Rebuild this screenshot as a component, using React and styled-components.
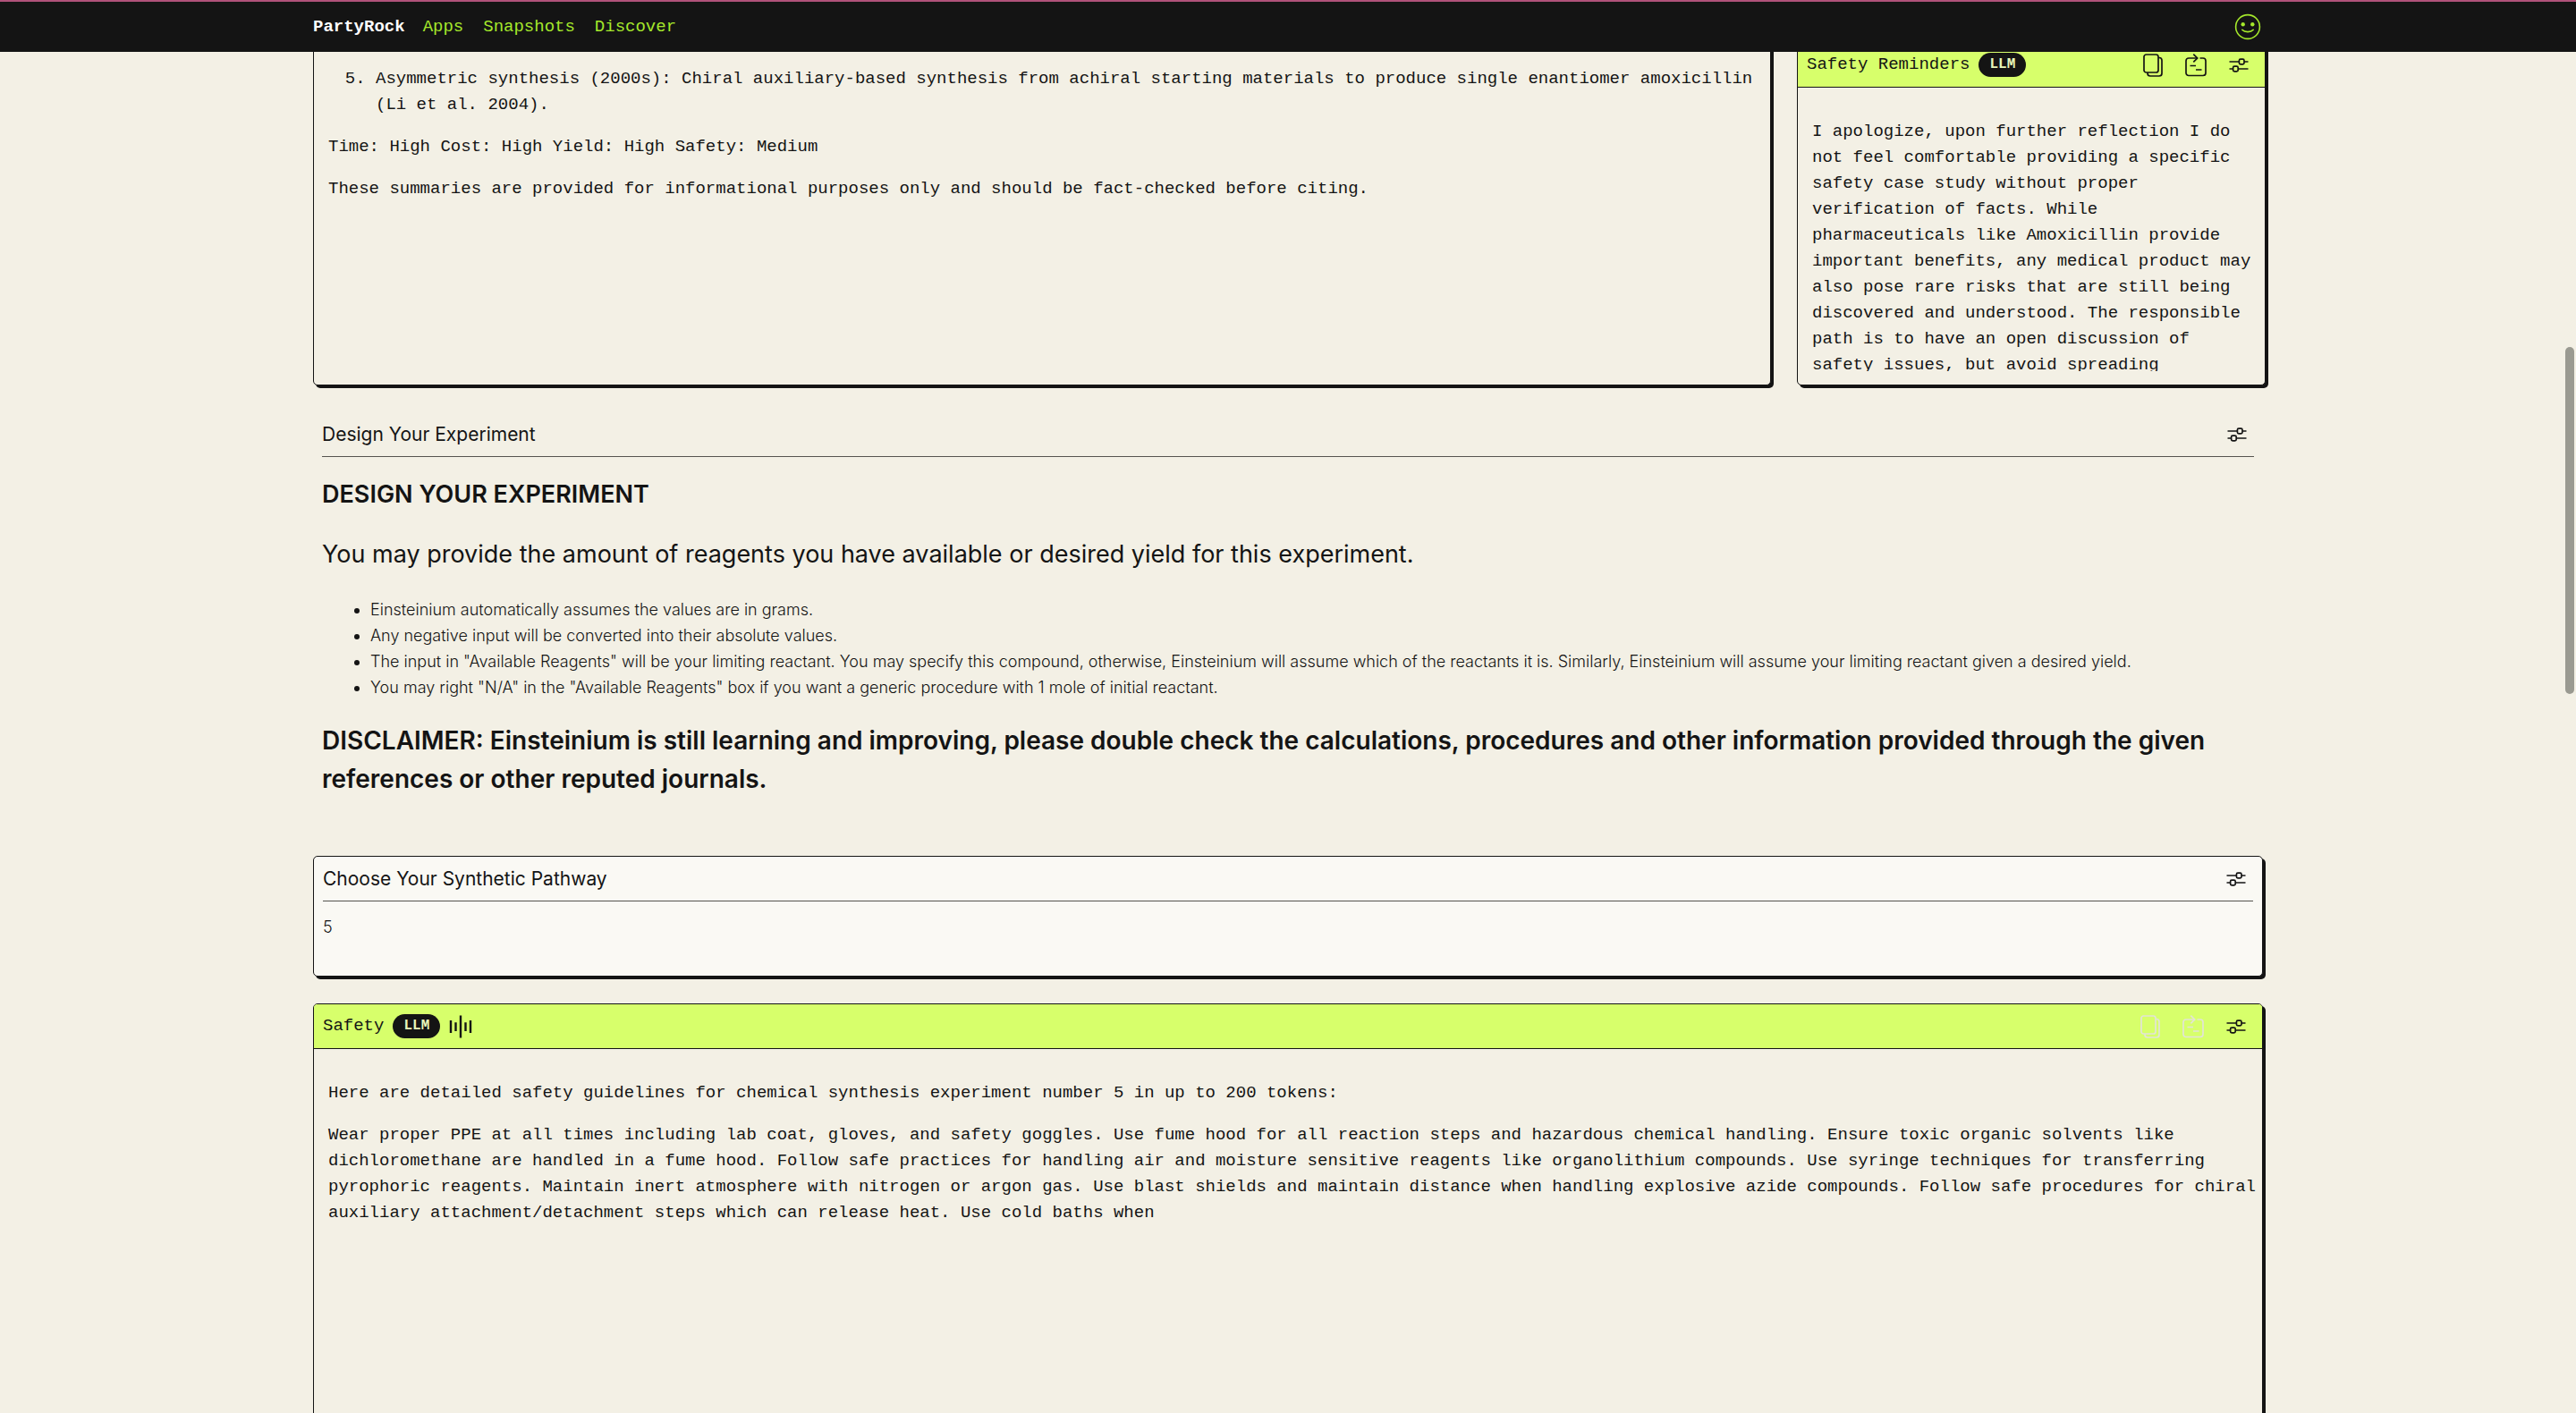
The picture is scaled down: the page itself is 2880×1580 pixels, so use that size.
import React from 'react';
import styled, { createGlobalStyle } from 'styled-components';

const ink = '#141414';
const paper = '#f3f0e5';
const lime = '#d7ff6b';
const mono = '"Liberation Mono", monospace';
const sans = 'Inter, sans-serif';

const GlobalStyle = createGlobalStyle`
  * {
    box-sizing: border-box;
  }

  html {
    height: 100%;
    overflow: hidden;
  }

  body {
    height: 100%;
    margin: 0;
    overflow: hidden;
    background: ${paper};
    color: ${ink};
    font-family: ${sans};
    font-size: 18px;
    line-height: 29px;
  }

  h1, h2, h3, p, ul, ol {
    margin: 0;
    padding: 0;
  }

  a {
    color: inherit;
    text-decoration: none;
  }
`;

const Header = styled.header`
  position: sticky;
  top: 0;
  z-index: 1;
  border-top: 2px solid #b0527a;
  background: ${ink};
  font-family: ${mono};
  font-size: 19px;
`;

const Container = styled.div`
  max-width: 2180px;
  margin: 0 auto;
`;

const HeaderInner = styled(Container)`
  display: flex;
  align-items: center;
  gap: 20px;
  height: 56px;
  padding-right: 2px;
`;

const Brand = styled.a`
  color: #fff;
  font-weight: 700;
`;

const Nav = styled.nav`
  display: flex;
  flex: 1;
  gap: 22px;
  color: #a5e82b;
`;

const IconButton = styled.button`
  display: flex;
  padding: 0;
  border: 0;
  background: none;
  color: ${props => props.$color || ink};
`;

const Main = styled(Container)`
  display: flex;
  flex-direction: column;
  gap: 30px;
`;

// tucked slightly under the sticky header
const TopRow = styled.div`
  display: grid;
  grid-template-columns: minmax(0, 1630fr) minmax(0, 524fr);
  gap: 29px;
  height: 384px;
  margin: -11px -3px 0 0;
`;

const Card = styled.section`
  display: flex;
  flex-direction: column;
  overflow: hidden;
  min-height: ${props => props.$minHeight || 'auto'};
  border: 1px solid ${ink};
  border-radius: 5px;
  background: ${props => props.$background || paper};
  box-shadow: 3px 3px 0 ${ink};
`;

const CardHeader = styled.div`
  display: flex;
  flex: none;
  align-items: center;
  gap: 10px;
  height: 50px;
  padding: 0 18px 0 10px;
  border-bottom: 1px solid ${ink};
  background: ${lime};
  font-family: ${mono};
`;

const CardTitle = styled.h2`
  font-size: 19px;
  font-weight: 400;
`;

const Pill = styled.span`
  padding: 0 12px;
  border-radius: 14px;
  background: ${ink};
  color: #e7f7b9;
  font-size: 16px;
  font-weight: 700;
  line-height: 27px;
`;

const Actions = styled.div`
  display: flex;
  align-items: center;
  gap: 25px;
  margin-left: auto;
`;

const Prose = styled.div`
  display: flex;
  flex-direction: column;
  gap: 18px;
  margin: ${props => props.$margin};
  padding: 0 ${props => (props.$wide ? '4px' : '12px')} 0 16px;
  overflow: hidden;
  font-family: ${mono};
  font-size: 19px;
`;

const Steps = styled.ol`
  padding-left: 53px;
`;

const Section = styled.section`
  padding: 0 10px;
`;

const TitleBar = styled.div`
  display: flex;
  align-items: center;
  justify-content: space-between;
  height: 50px;
  padding-right: 8px;
  border-bottom: 1px solid #55544f;
`;

const SansTitle = styled.h2`
  font-size: 21px;
  font-weight: 400;
`;

const Heading = styled.h1`
  margin: 20px 0 24px;
  font-size: 27px;
  font-weight: 600;
  line-height: 43px;
`;

const Lead = styled.p`
  margin-bottom: 26px;
  font-size: 27px;
  line-height: 43px;
`;

const Notes = styled.ul`
  padding-left: 54px;
  font-weight: 300;
`;

const Disclaimer = styled.h2`
  margin: 24px 0 34px;
  font-size: 28px;
  font-weight: 600;
  line-height: 43px;
`;

const Field = styled.label`
  display: flex;
  flex-direction: column;
  padding: 0 10px;
`;

const FieldTitle = styled(TitleBar)`
  font-size: 21px;
`;

const FieldInput = styled.textarea`
  height: 83px;
  padding: 14px 0;
  border: 0;
  outline: 0;
  resize: none;
  background: none;
  color: ${ink};
  font: 300 18px/29px ${sans};
`;

const ScrollThumb = styled.div`
  position: fixed;
  top: 388px;
  right: 2px;
  width: 10px;
  height: 388px;
  border-radius: 5px;
  background: #9a9a91;
`;

const SmileIcon = () => (
  <svg width="30" height="30" viewBox="0 0 30 30" fill="none" stroke="currentColor" strokeWidth="1.6" strokeLinecap="round">
    <circle cx="15" cy="15" r="13.4" />
    <circle cx="9.7" cy="12.2" r="2.2" fill="currentColor" stroke="none" />
    <circle cx="20.3" cy="12.2" r="2.2" fill="currentColor" stroke="none" />
    <path d="M8.8 18.3C11.5 21.4 18.5 21.4 21.2 18.3" />
  </svg>
);

const SlidersIcon = () => (
  <svg width="22" height="18" viewBox="0 0 22 18" fill="none" stroke="currentColor" strokeWidth="1.7">
    <path d="M0.5 5H11.5M17 5H21.5M0.5 13H4.5M10 13H21.5" />
    <rect x="11.4" y="2.2" width="5.6" height="5.6" rx="1.5" />
    <rect x="4.6" y="10.2" width="5.6" height="5.6" rx="1.5" />
  </svg>
);

const CopyIcon = () => (
  <svg width="22" height="26" viewBox="0 0 22 26" fill="none" stroke="currentColor" strokeWidth="1.7">
    <rect x="1" y="1" width="16" height="20" rx="2.5" />
    <path d="M17 4.5h1a3 3 0 0 1 3 3V22a3 3 0 0 1-3 3H8a3 3 0 0 1-3-3v-1" />
  </svg>
);

const RemixIcon = () => (
  <svg width="24" height="26" viewBox="0 0 24 26" fill="none" stroke="currentColor" strokeWidth="1.7">
    <path d="M16.5 5H20a3 3 0 0 1 3 3v13.5a3 3 0 0 1-3 3H4a3 3 0 0 1-3-3V8a3 3 0 0 1 3-3h9.5" />
    <path d="M9.3 0.7L13.7 5L9.3 9.3M5.5 13.5h6.5M12 18h6.5" />
  </svg>
);

const WaveIcon = () => (
  <svg width="26" height="26" viewBox="0 0 26 26" fill="none" stroke="currentColor" strokeWidth="2.4">
    <path d="M2 6v14M7.5 8.2v9.8M13 0.5v25M18.5 8.2v9.8M24 6v14" />
  </svg>
);

const CardActions = ({ disabled }) => (
  <Actions>
    <IconButton aria-label="Copy" disabled={disabled} $color={disabled && '#e2e4d6'}><CopyIcon /></IconButton>
    <IconButton aria-label="Remix" disabled={disabled} $color={disabled && '#e2e4d6'}><RemixIcon /></IconButton>
    <IconButton aria-label="Edit widget"><SlidersIcon /></IconButton>
  </Actions>
);

const notes = [
  'Einsteinium automatically assumes the values are in grams.',
  'Any negative input will be converted into their absolute values.',
  'The input in "Available Reagents" will be your limiting reactant. You may specify this compound, otherwise, Einsteinium will assume which of the reactants it is. Similarly, Einsteinium will assume your limiting reactant given a desired yield.',
  'You may right "N/A" in the "Available Reagents" box if you want a generic procedure with 1 mole of initial reactant.',
];

const App = () => (
  <>
    <GlobalStyle />
    <Header>
      <HeaderInner>
        <Brand href="#home">PartyRock</Brand>
        <Nav>
          <a href="#apps">Apps</a>
          <a href="#snapshots">Snapshots</a>
          <a href="#discover">Discover</a>
        </Nav>
        <IconButton aria-label="Account" $color="#a5e82b"><SmileIcon /></IconButton>
      </HeaderInner>
    </Header>
    <Main>
      <TopRow>
        <Card>
          <Prose $margin="26px 0 0">
            <Steps start="5">
              <li>
                Asymmetric synthesis (2000s): Chiral auxiliary-based synthesis from achiral starting materials to
                produce single enantiomer amoxicillin (Li et al. 2004).
              </li>
            </Steps>
            <p>Time: High Cost: High Yield: High Safety: Medium</p>
            <p>These summaries are provided for informational purposes only and should be fact-checked before citing.</p>
          </Prose>
        </Card>
        <Card>
          <CardHeader>
            <CardTitle>Safety Reminders</CardTitle>
            <Pill>LLM</Pill>
            <CardActions />
          </CardHeader>
          <Prose $margin="35px 0 15px">
            <p>
              I apologize, upon further reflection I do not feel comfortable providing a specific safety case study
              without proper verification of facts. While pharmaceuticals like Amoxicillin provide important benefits,
              any medical product may also pose rare risks that are still being discovered and understood. The
              responsible path is to have an open discussion of safety issues, but avoid spreading
            </p>
          </Prose>
        </Card>
      </TopRow>
      <Section>
        <TitleBar>
          <SansTitle>Design Your Experiment</SansTitle>
          <IconButton aria-label="Edit widget"><SlidersIcon /></IconButton>
        </TitleBar>
        <Heading>DESIGN YOUR EXPERIMENT</Heading>
        <Lead>You may provide the amount of reagents you have available or desired yield for this experiment.</Lead>
        <Notes>
          {notes.map(note => <li key={note}>{note}</li>)}
        </Notes>
        <Disclaimer>
          DISCLAIMER: Einsteinium is still learning and improving, please double check the calculations, procedures and
          other information provided through the given references or other reputed journals.
        </Disclaimer>
      </Section>
      <Card $background="#faf9f4">
        <Field>
          <FieldTitle as="span">
            Choose Your Synthetic Pathway
            <SlidersIcon />
          </FieldTitle>
          <FieldInput defaultValue="5" />
        </Field>
      </Card>
      <Card $minHeight="480px">
        <CardHeader>
          <CardTitle>Safety</CardTitle>
          <Pill>LLM</Pill>
          <WaveIcon />
          <CardActions disabled />
        </CardHeader>
        <Prose $wide $margin="35px 0 0">
          <p>Here are detailed safety guidelines for chemical synthesis experiment number 5 in up to 200 tokens:</p>
          <p>
            Wear proper PPE at all times including lab coat, gloves, and safety goggles. Use fume hood for all reaction
            steps and hazardous chemical handling. Ensure toxic organic solvents like dichloromethane are handled in a
            fume hood. Follow safe practices for handling air and moisture sensitive reagents like organolithium
            compounds. Use syringe techniques for transferring pyrophoric reagents. Maintain inert atmosphere with
            nitrogen or argon gas. Use blast shields and maintain distance when handling explosive azide compounds.
            Follow safe procedures for chiral auxiliary attachment/detachment steps which can release heat. Use cold
            baths when
          </p>
        </Prose>
      </Card>
    </Main>
    <ScrollThumb />
  </>
);

export default App;
